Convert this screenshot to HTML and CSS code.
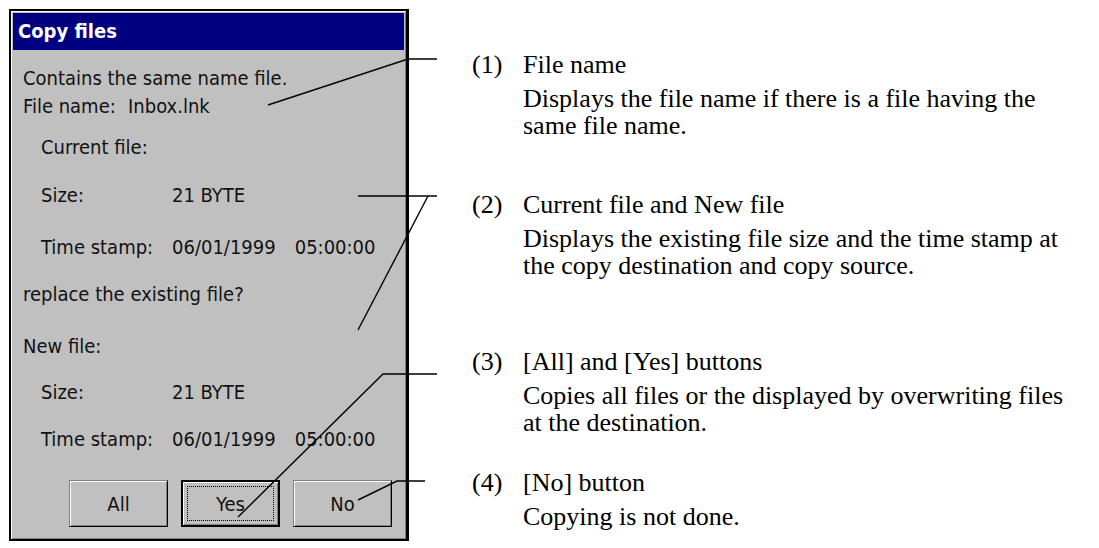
FILE: index.html
```html
<!DOCTYPE html>
<html lang="en">
<head>
<meta charset="UTF-8" />
<title>Copy files</title>
<link rel="stylesheet" href="styles.css">
</head>
<body>

<div class="sheet">
  <div class="dialog">
    <div class="caption">Copy files</div>
    <div class="body">
      <div class="row r1">Contains the same name file.</div>
      <div class="row r2"><span class="name-lbl">File name:</span><span>Inbox.lnk</span></div>
      <div class="row r3 indent">Current file:</div>
      <div class="row r4 indent"><span class="lbl">Size:</span><span>21 BYTE</span></div>
      <div class="row r5 indent"><span class="lbl">Time stamp:</span><span>06/01/1999</span><span class="time">05:00:00</span></div>
      <div class="row r6">replace the existing file?</div>
      <div class="row r7">New file:</div>
      <div class="row r8 indent"><span class="lbl">Size:</span><span>21 BYTE</span></div>
      <div class="row r9 indent"><span class="lbl">Time stamp:</span><span>06/01/1999</span><span class="time">05:00:00</span></div>
      <div class="buttons">
        <button class="btn">All</button>
        <button class="btn default"><span class="focus">Yes</span></button>
        <button class="btn">No</button>
      </div>
    </div>
  </div>

  <div class="notes">
    <div class="note">
      <div class="note-title"><span class="num">(1)</span>File name</div>
      <div class="note-text">Displays the file name if there is a file having the<br>same file name.</div>
    </div>
    <div class="note n2">
      <div class="note-title"><span class="num">(2)</span>Current file and New file</div>
      <div class="note-text">Displays the existing file size and the time stamp at<br>the copy destination and copy source.</div>
    </div>
    <div class="note n3">
      <div class="note-title"><span class="num">(3)</span>[All] and [Yes] buttons</div>
      <div class="note-text">Copies all files or the displayed by overwriting files<br>at the destination.</div>
    </div>
    <div class="note n4">
      <div class="note-title"><span class="num">(4)</span>[No] button</div>
      <div class="note-text">Copying is not done.</div>
    </div>
  </div>

  <!-- leader lines from the dialog to the notes -->
  <svg class="callouts" width="1099" height="548" viewBox="0 0 1099 548">
    <g stroke="#000" stroke-width="1.4" fill="none">
      <polyline points="268,105 408,59 437,59" />
      <polyline points="358,196 437,196" />
      <polyline points="358,330 428,196" />
      <polyline points="238,517 383,374 437,374" />
      <polyline points="358,500 397,481 425,481" />
    </g>
  </svg>
</div>

</body>
</html>
```

FILE: styles.css
```css
body {
  margin: 0;
  background: #fff;
  color: #000;
}

.sheet {
  position: relative;
  width: 1099px;
  height: 548px;
  display: flex;
  align-items: flex-start;
}

/* Windows CE style dialog */
.dialog {
  margin: 9px 0 0 9px;
  width: 391px;
  height: 524px;
  border: 2px solid #000;
  border-right-width: 3px;
  padding: 2px;
  background: #c0c0c0;
  box-shadow: inset 1px 1px 0 #fff, inset -1px -1px 0 #808080;
  font-family: "DejaVu Sans Condensed", "DejaVu Sans", sans-serif;
  font-stretch: condensed;
  font-size: 20px;
  color: #111;
  display: flex;
  flex-direction: column;
}
.caption {
  height: 37px;
  line-height: 37px;
  background: #000080;
  color: #fff;
  font-weight: bold;
  padding-left: 5px;
}
.body {
  padding-top: 18px;
}
.row {
  line-height: 20px;
  padding-left: 10px;
  display: flex;
  white-space: nowrap;
}
.row.indent { padding-left: 28px; }
.r1 { height: 28px; }
.r2 { height: 41px; }
.r3 { height: 48px; }
.r4 { height: 52px; }
.r5 { height: 47px; }
.r6 { height: 52px; }
.r7 { height: 46px; }
.r8 { height: 47px; }
.r9 { height: 51px; }
.name-lbl { width: 105px; }
.lbl { width: 131px; }
.time { margin-left: 19px; }

.buttons {
  display: flex;
  gap: 13px;
  padding-left: 56px;
}
.btn {
  width: 99px;
  height: 47px;
  padding: 0;
  background: #c0c0c0;
  border: 1px solid;
  border-color: #808080 #000 #000 #808080;
  box-shadow: inset 1px 1px 0 #fff, inset -1px -1px 0 #808080;
  font: inherit;
  color: #111;
}
.btn.default {
  border: 2px solid #000;
  padding: 4px;
}
.focus {
  display: flex;
  align-items: center;
  justify-content: center;
  height: 100%;
  border: 1px dotted #000;
  box-sizing: border-box;
}

/* notes column */
.notes {
  margin-left: 63px;
  padding-top: 51px;
  font-family: "Liberation Serif", "Times New Roman", serif;
  font-size: 26px;
  line-height: 27px;
  white-space: nowrap;
}
.note-title .num {
  display: inline-block;
  width: 51px;
}
.note-text {
  margin: 7px 0 0 51px;
}
.n2 { margin-top: 52px; }
.n3 { margin-top: 69px; }
.n4 { margin-top: 33px; }

.callouts {
  position: absolute;
  left: 0;
  top: 0;
  pointer-events: none;
}
```
